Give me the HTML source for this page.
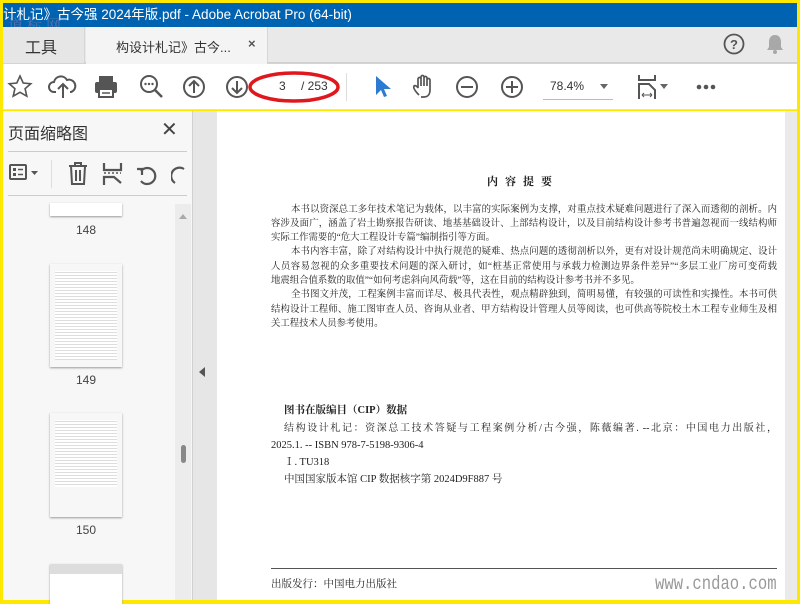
<!DOCTYPE html>
<html><head><meta charset="utf-8"><style>
*{margin:0;padding:0;box-sizing:border-box}
body{width:800px;height:600px;overflow:hidden;background:#ffe800;position:relative;font-family:"Liberation Sans","Noto Sans CJK SC",sans-serif}
.abs{position:absolute}
#title{left:3px;top:3px;width:794px;height:24px;background:#0063b1;color:#fff;font-size:13.5px;line-height:23px;white-space:nowrap;overflow:hidden}
#tabs{left:3px;top:27px;width:794px;height:36px;background:#e9e9e9;border-bottom:1px solid #cfcfcf}
#tb{left:3px;top:64px;width:794px;height:46px;background:#fff;border-bottom:1px solid #e0e0e0}
#lp{left:3px;top:111px;width:189px;height:489px;background:#f7f7f7}
#strip{left:192px;top:111px;width:25px;height:489px;background:#e6e6e6;border-left:1px solid #d0d0d0}
#page{left:217px;top:111px;width:568px;height:489px;background:#fff}
#rs{left:785px;top:111px;width:12px;height:489px;background:#eaeaea}
.ln{position:absolute;left:271px;width:506px;font-family:"Liberation Serif","Noto Serif CJK SC",serif;font-size:9.4px;color:#222;white-space:nowrap;text-align:justify;text-align-last:justify;line-height:12px}
.ln.i{left:291px;width:486px}
.ln.l{text-align-last:left}
.th{position:absolute;left:47px;width:72px;background:#fff;box-shadow:0 1px 2px #999}
.tl{position:absolute;left:47px;width:72px;text-align:center;font-size:12px;color:#444}
svg{position:absolute}
</style></head><body>
<div id="title" class="abs">计札记》古今强 2024年版.pdf - Adobe Acrobat Pro (64-bit)</div>
<div class="abs" style="left:8px;top:14px;font-size:15px;color:#8a7db0;opacity:.6;letter-spacing:4px;font-family:'Noto Serif CJK SC',serif">道标网</div>
<div id="tabs" class="abs">
 <div class="abs" style="left:0;top:0;width:82px;height:36px;background:#e6e6e6;border-right:1px solid #d6d6d6"></div>
 <div class="abs" style="left:22px;top:7px;font-size:16px;color:#333">工具</div>
 <div class="abs" style="left:83px;top:0;width:182px;height:37px;background:#f4f4f4;border-right:1px solid #d6d6d6"></div>
 <div class="abs" style="left:113px;top:10px;font-size:13px;color:#333">构设计札记》古今...</div>
 <div class="abs" style="left:245px;top:9px;font-size:13px;color:#555;font-weight:bold">×</div>
 <svg style="left:720px;top:6px" width="22" height="22"><circle cx="11" cy="11" r="9.5" fill="none" stroke="#555" stroke-width="1.8"/><text x="11" y="16" font-size="13" font-weight="bold" text-anchor="middle" fill="#555" font-family="Liberation Sans">?</text></svg>
 <svg style="left:762px;top:6px" width="20" height="22"><path d="M10 2c-4 0-6 3-6 7v5l-2 3h16l-2-3V9c0-4-2-7-6-7z" fill="#a8a8a8"/><circle cx="10" cy="19" r="2" fill="#a8a8a8"/></svg>
</div>
<div id="tb" class="abs">
 <svg style="left:4px;top:10px" width="26" height="26"><path d="M13 2l3.2 7 7.6.7-5.7 5 1.7 7.5L13 18.3 6.2 22.2l1.7-7.5-5.7-5 7.6-.7z" fill="none" stroke="#555" stroke-width="1.6"/></svg>
 <svg style="left:45px;top:10px" width="30" height="26"><path d="M8 18H6a5 5 0 0 1 0-10 7 7 0 0 1 13-2 5 5 0 0 1 4 12h-1" fill="none" stroke="#555" stroke-width="2"/><path d="M15 24V11M10 15l5-5 5 5" fill="none" stroke="#555" stroke-width="2"/></svg>
 <svg style="left:90px;top:10px" width="26" height="26"><rect x="6" y="2" width="14" height="6" fill="#555"/><rect x="2" y="8" width="22" height="11" rx="2" fill="#555"/><rect x="6" y="15" width="14" height="8" fill="#fff" stroke="#555" stroke-width="2"/><line x1="9" y1="19" x2="17" y2="19" stroke="#555" stroke-width="1.5"/></svg>
 <svg style="left:136px;top:10px" width="26" height="26"><circle cx="10" cy="10" r="8" fill="none" stroke="#555" stroke-width="2"/><path d="M16 16l7 7" stroke="#555" stroke-width="2.5"/><circle cx="6.5" cy="10" r="1.2" fill="#555"/><circle cx="10" cy="10" r="1.2" fill="#555"/><circle cx="13.5" cy="10" r="1.2" fill="#555"/></svg>
 <svg style="left:179px;top:10px" width="26" height="26"><circle cx="12" cy="13" r="10" fill="none" stroke="#555" stroke-width="2"/><path d="M12 19V7M7 12l5-5 5 5" fill="none" stroke="#555" stroke-width="2"/></svg>
 <svg style="left:222px;top:10px" width="26" height="26"><circle cx="12" cy="13" r="10" fill="none" stroke="#555" stroke-width="2"/><path d="M12 7v12M7 14l5 5 5-5" fill="none" stroke="#555" stroke-width="2"/></svg>
 <div class="abs" style="left:276px;top:15px;font-size:12px;color:#333">3</div>
 <div class="abs" style="left:298px;top:15px;font-size:12px;color:#333">/ 253</div>
 <svg style="left:244px;top:4px" width="96" height="38"><ellipse cx="47" cy="19" rx="44" ry="14" fill="none" stroke="#e0181e" stroke-width="3.5"/></svg>
 <div class="abs" style="left:343px;top:9px;width:1px;height:28px;background:#ddd"></div>
 <svg style="left:369px;top:10px" width="20" height="26"><path d="M4 2v19l5-5 3 7 3-1-3-7h7z" fill="#2d7bd1"/></svg>
 <svg style="left:408px;top:9px" width="28" height="28"><path d="M8 22c-3-3-6-7-5-9 1-1 3 0 4 2V6a1.5 1.5 0 0 1 3 0v7V4a1.5 1.5 0 0 1 3 0v9V5a1.5 1.5 0 0 1 3 0v8V7a1.5 1.5 0 0 1 3 0v10c0 4-2 7-6 7h-3" fill="none" stroke="#555" stroke-width="1.7"/></svg>
 <svg style="left:452px;top:10px" width="26" height="26"><circle cx="12" cy="13" r="10" fill="none" stroke="#555" stroke-width="2"/><path d="M6 13h12" stroke="#555" stroke-width="2"/></svg>
 <svg style="left:497px;top:10px" width="26" height="26"><circle cx="12" cy="13" r="10" fill="none" stroke="#555" stroke-width="2"/><path d="M6 13h12M12 7v12" stroke="#555" stroke-width="2"/></svg>
 <div class="abs" style="left:547px;top:15px;font-size:12px;color:#333">78.4%</div>
 <div class="abs" style="left:597px;top:20px;border:4px solid transparent;border-top:5px solid #666"></div>
 <div class="abs" style="left:540px;top:35px;width:70px;height:1px;background:#bbb"></div>
 <svg style="left:634px;top:10px" width="22" height="26"><path d="M2 1v5h16V1" fill="none" stroke="#555" stroke-width="2"/><path d="M2 25V10h10l6 6v9" fill="none" stroke="#555" stroke-width="2"/><path d="M5 21h10M5 21l2-2M5 21l2 2M15 21l-2-2M15 21l-2 2" stroke="#555" stroke-width="1"/></svg>
 <div class="abs" style="left:657px;top:20px;border:4px solid transparent;border-top:5px solid #666"></div>
 <svg style="left:692px;top:19px" width="22" height="8"><circle cx="4" cy="4" r="2.3" fill="#555"/><circle cx="11" cy="4" r="2.3" fill="#555"/><circle cx="18" cy="4" r="2.3" fill="#555"/></svg>
</div>
<div id="lp" class="abs">
 <div class="abs" style="left:5px;top:9px;font-size:16px;color:#333">页面缩略图</div>
 <div class="abs" style="left:158px;top:6px;font-size:20px;color:#444">✕</div>
 <div class="abs" style="left:5px;top:40px;width:179px;height:1px;background:#ccc"></div>
 <svg style="left:5px;top:51px" width="34" height="22"><rect x="2" y="3" width="16" height="14" rx="1" fill="none" stroke="#555" stroke-width="2"/><rect x="5" y="6" width="3" height="3" fill="#555"/><rect x="5" y="11" width="3" height="3" fill="#555"/><path d="M10 7.5h5M10 12.5h5" stroke="#555" stroke-width="1.5"/><path d="M23 9h7l-3.5 4z" fill="#555"/></svg>
 <div class="abs" style="left:48px;top:49px;width:1px;height:28px;background:#ddd"></div>
 <svg style="left:64px;top:50px" width="24" height="26"><path d="M2 5h18M8 5V2h6v3M4 5l1 18h12l1-18M9 9v11M13 9v11" fill="none" stroke="#555" stroke-width="2"/></svg>
 <svg style="left:99px;top:50px" width="22" height="26"><path d="M2 2v7h17V2M2 24v-8h10l7 6" fill="none" stroke="#555" stroke-width="2.2"/><path d="M2 12h17" stroke="#555" stroke-width="1.5" stroke-dasharray="2 2"/></svg>
 <svg style="left:133px;top:52px" width="24" height="24"><path d="M5 18a8 8 0 1 0 0-10" fill="none" stroke="#555" stroke-width="2.2"/><path d="M1 6l5 0 0 6" fill="none" stroke="#555" stroke-width="2.2"/></svg>
 <svg style="left:168px;top:52px" width="16" height="24"><path d="M13 6a8 8 0 0 0-9 14" fill="none" stroke="#555" stroke-width="2.2"/></svg>
 <div class="abs" style="left:5px;top:84px;width:179px;height:1px;background:#ccc"></div>
 <div class="th" style="top:92px;height:13px"></div>
 <div class="tl" style="top:112px">148</div>
 <div class="th" style="top:153px;height:103px;background:repeating-linear-gradient(#fff 0 2px,#ddd 2px 3px);background-clip:content-box;padding:7px 5px"></div>
 <div class="tl" style="top:262px">149</div>
 <div class="th" style="top:302px;height:104px;background:repeating-linear-gradient(#fff 0 2px,#ddd 2px 3px);background-clip:content-box;padding:7px 5px 30px"></div>
 <div class="tl" style="top:412px">150</div>
 <div class="th" style="top:453px;height:40px;background:linear-gradient(#ddd 0 10px,#fff 10px)"></div>
 <div class="abs" style="left:172px;top:93px;width:16px;height:396px;background:#ececec"></div>
 <div class="abs" style="left:176px;top:99px;border:4px solid transparent;border-bottom:5px solid #aaa"></div>
 <div class="abs" style="left:178px;top:334px;width:5px;height:18px;border-radius:3px;background:#888"></div>
</div>
<div id="strip" class="abs"><div class="abs" style="left:6px;top:256px;border:5px solid transparent;border-right:6px solid #555;border-left:0"></div></div>
<div id="page" class="abs"></div>
<div id="rs" class="abs"></div>
<div class="abs" style="left:487px;top:173px;font-family:'Noto Serif CJK SC',serif;font-size:11px;font-weight:bold;letter-spacing:7px;color:#222">内容提要</div>
<div class="ln i" style="top:204px">本书以资深总工多年技术笔记为载体，以丰富的实际案例为支撑，对重点技术疑难问题进行了深入而透彻的剖析。内</div>
<div class="ln" style="top:218px">容涉及面广，涵盖了岩土勘察报告研读、地基基础设计、上部结构设计，以及目前结构设计参考书普遍忽视而一线结构师</div>
<div class="ln l" style="top:232px">实际工作需要的“危大工程设计专篇”编制指引等方面。</div>
<div class="ln i" style="top:246px">本书内容丰富，除了对结构设计中执行规范的疑难、热点问题的透彻剖析以外，更有对设计规范尚未明确规定、设计</div>
<div class="ln" style="top:261px">人员容易忽视的众多重要技术问题的深入研讨，如“桩基正常使用与承载力检测边界条件差异”“多层工业厂房可变荷载</div>
<div class="ln l" style="top:275px">地震组合值系数的取值”“如何考虑斜向风荷载”等，这在目前的结构设计参考书并不多见。</div>
<div class="ln i" style="top:289px">全书图文并茂，工程案例丰富而详尽、极具代表性，观点精辟独到，简明易懂，有较强的可读性和实操性。本书可供</div>
<div class="ln" style="top:304px">结构设计工程师、施工图审查人员、咨询从业者、甲方结构设计管理人员等阅读，也可供高等院校土木工程专业师生及相</div>
<div class="ln l" style="top:318px">关工程技术人员参考使用。</div>
<div class="ln l" style="left:284px;top:405px;font-weight:bold;font-size:10.5px">图书在版编目（CIP）数据</div>
<div class="ln i" style="left:284px;width:493px;top:423px;font-size:10px">结构设计札记：资深总工技术答疑与工程案例分析/古今强，陈薇编著. --北京：中国电力出版社，</div>
<div class="ln l" style="top:440px;font-size:10.5px">2025.1. -- ISBN 978-7-5198-9306-4</div>
<div class="ln l" style="left:284px;top:457px;font-size:10.5px">Ⅰ. TU318</div>
<div class="ln l" style="left:284px;top:474px;font-size:10.5px">中国国家版本馆 CIP 数据核字第 2024D9F887 号</div>
<div class="abs" style="left:271px;top:568px;width:506px;height:1px;background:#555"></div>
<div class="ln l" style="top:579px;font-size:10.5px">出版发行：中国电力出版社</div>
<div class="abs" style="left:655px;top:573px;font-family:'Liberation Mono',monospace;font-size:19px;color:#999;transform:scaleX(.82);transform-origin:left">www.cndao.com</div>
</body></html>
